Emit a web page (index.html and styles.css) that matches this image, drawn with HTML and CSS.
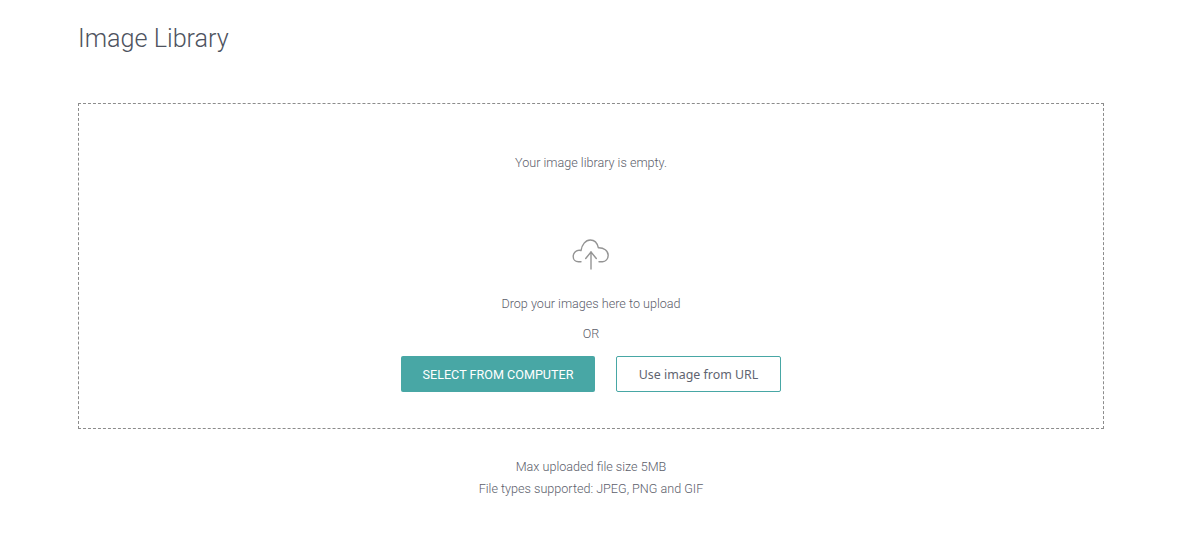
FILE: index.html
```html
<!DOCTYPE html>
<html lang="en">
<head>
    <meta charset="UTF-8">
    <title>Image Library</title>
    <link rel="stylesheet" href="styles.css">
</head>
<body>
    <div class="page">
        <h1 class="page-title">Image Library</h1>
        <div class="dropzone">
            <p class="empty-text">Your image library is empty.</p>
            <svg class="upload-icon" width="38" height="33" viewBox="0 0 38 33" fill="none" stroke="#949494" stroke-width="1.4" stroke-linecap="round" stroke-linejoin="round">
                <path d="M9 24.700H6.500C3.400 24.700 1.200 22.500 1.200 19.400C1.200 16.200 3.700 13.600 6.700 13.300C7.500 13.200 8.300 13.300 9 13.600C9.800 7.700 13.500 3 18.300 3C22.300 3 25.300 6 26.300 10.700C31.800 10.500 36.200 13.700 36.200 18.300C36.200 22 33.600 24.700 30.500 24.700H27"/>
                <path d="M19 32V15"/>
                <path d="M13.700 21.500L19 15L24.300 21.500"/>
            </svg>
            <p class="drop-text">Drop your images here to upload</p>
            <p class="or-text">OR</p>
            <div class="actions">
                <a class="btn btn-primary">SELECT FROM COMPUTER</a>
                <a class="btn btn-outline">Use image from URL</a>
            </div>
        </div>
        <div class="limits">
            <p>Max uploaded file size 5MB</p>
            <p>File types supported: JPEG, PNG and GIF</p>
        </div>
    </div>
</body>
</html>
```
FILE: styles.css
```css
body {
    font-family: Roboto, "Liberation Sans", sans-serif;
    margin: 0;
    padding: 0;
    background-color: #fff;
    color: #5c606b;
}
p {
    margin: 0;
}
.page {
    width: 1026px;
    margin: 0 auto;
    padding-left: 2px;
    padding-top: 24px;
}
.page-title {
    margin: 0;
    font-size: 25.2px;
    font-weight: 300;
    line-height: 30px;
    color: #4e5360;
}
.dropzone {
    box-sizing: border-box;
    height: 326px;
    margin-top: 49px;
    padding-top: 51px;
    border: 1px dashed #8c8c8c;
    display: flex;
    flex-direction: column;
    align-items: center;
    font-size: 12.6px;
    font-weight: 300;
}
.empty-text {
    line-height: 16px;
}
.upload-icon {
    margin-top: 66px;
    display: block;
}
.drop-text {
    margin-top: 26px;
    line-height: 16px;
}
.or-text {
    margin-top: 14px;
    line-height: 16px;
}
.actions {
    margin-top: 14px;
    display: flex;
    gap: 21px;
}
.btn {
    box-sizing: border-box;
    height: 36px;
    border-radius: 2px;
    display: flex;
    align-items: center;
    justify-content: center;
    font-size: 12.6px;
    font-weight: 400;
    cursor: pointer;
}
.btn-primary {
    width: 194px;
    background-color: #48a7a5;
    color: #fff;
}
.btn-outline {
    width: 165px;
    background-color: #fff;
    border: 1px solid #48a7a5;
    font-family: "Noto Sans", sans-serif;
    font-size: 12.4px;
    color: #5f6470;
}
.limits {
    margin-top: 27px;
    text-align: center;
    font-size: 12.6px;
    font-weight: 300;
    line-height: 22px;
}
```
